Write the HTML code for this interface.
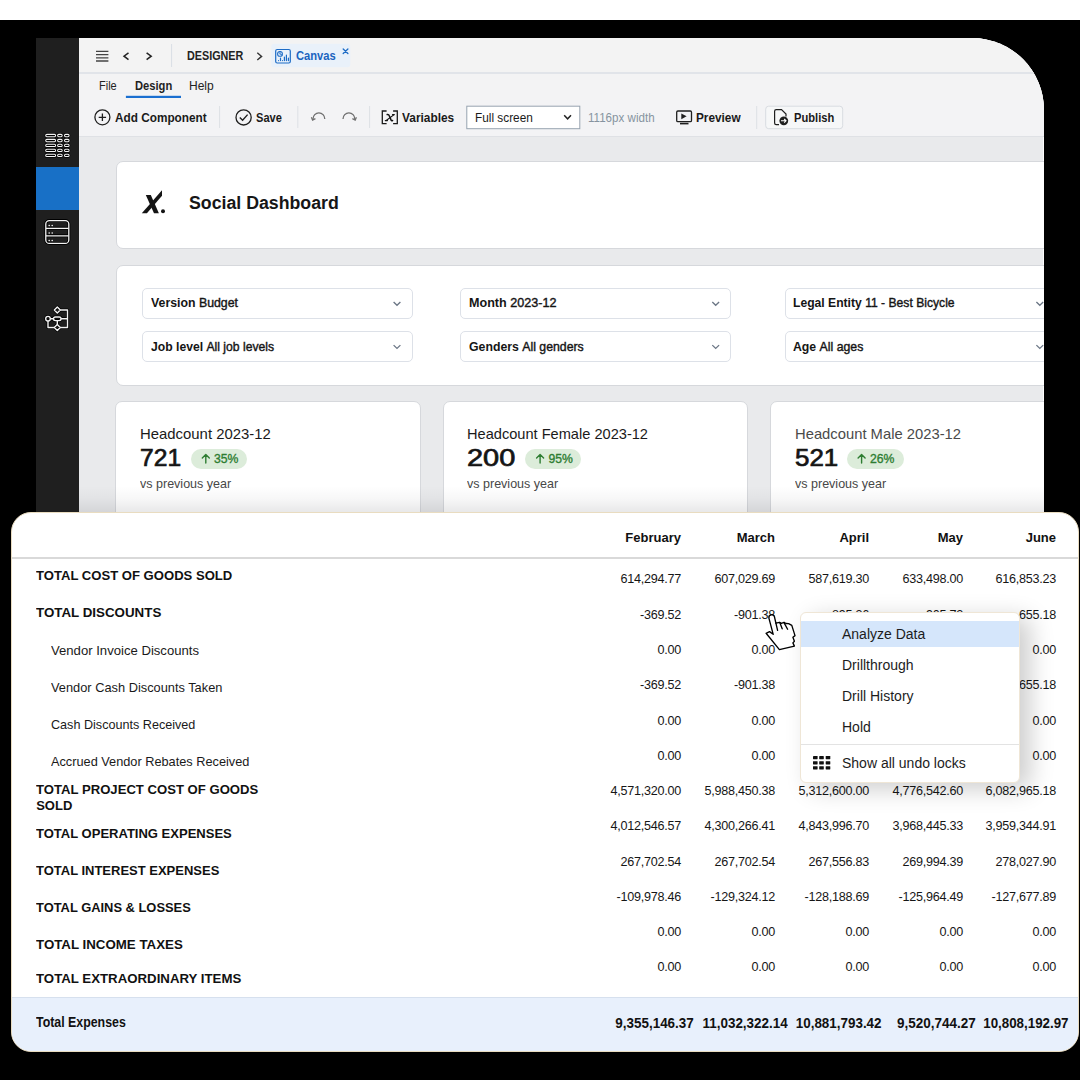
<!DOCTYPE html>
<html><head><meta charset="utf-8">
<style>
*{margin:0;padding:0;box-sizing:border-box}
html,body{width:1080px;height:1080px;overflow:hidden;background:#000;font-family:"Liberation Sans",sans-serif;color:#111}
.t{position:absolute;white-space:nowrap;line-height:1}
svg{position:absolute;overflow:visible}
#topband{position:absolute;left:0;top:0;width:1080px;height:20px;background:#fff}
#win{position:absolute;left:36px;top:38px;width:1008px;height:1000px;border-top-right-radius:72px;overflow:hidden;background:#e9eaec;box-shadow:inset -1px 1px 0 rgba(255,255,255,0.9)}
#side{position:absolute;left:0;top:0;width:43px;height:1000px;background:#1f1f1f}
#hdr{position:absolute;left:43px;top:0;width:965px;height:36px;background:#f3f3f3;border-bottom:2px solid #e1e4e9}
#menu{position:absolute;left:43px;top:36px;width:965px;height:26px;background:#f3f3f4}
#tool{position:absolute;left:43px;top:62px;width:965px;height:37px;background:#f3f3f5;border-bottom:1.5px solid #dfe1e5}
.card{position:absolute;background:#fff;border:1px solid #d6d8dc;border-radius:7px}
.dd{position:absolute;width:271px;height:31px;border:1.3px solid #dde1e8;border-radius:5px;background:#fff}
.badge{position:absolute;height:19.5px;border-radius:10px;background:#dcecda}
#fade{position:absolute;left:79px;top:486px;width:965px;height:26px;background:linear-gradient(to bottom,rgba(0,0,10,0) 0%,rgba(0,0,10,0.03) 50%,rgba(0,0,10,0.09) 100%)}
#panel{position:absolute;left:11px;top:512px;width:1068px;height:540px;background:#fff;border:1px solid #e9dcc0;border-radius:20px;overflow:hidden;box-shadow:0 1px 0 #000}
#ctx{position:absolute;left:800px;top:612px;width:220px;height:171px;background:#fff;border:1px solid #efe6d6;border-radius:6px;box-shadow:10px 6px 24px rgba(0,0,0,0.20)}
</style></head><body>
<div id="topband"></div>
<div id="win">
  <div id="side">
    <div style="position:absolute;left:0;top:129px;width:43px;height:43px;background:#1870c6"></div>
  </div>
  <div id="hdr"></div>
  <div id="menu"></div>
  <div id="tool"></div>
  <div class="card" style="left:80px;top:123px;width:1000px;height:88px"></div>
  <div class="card" style="left:80px;top:227px;width:1000px;height:121px"></div>
  <div class="card" style="left:79px;top:363px;width:306px;height:150px"></div>
  <div class="card" style="left:407px;top:363px;width:305px;height:150px"></div>
  <div class="card" style="left:734px;top:363px;width:306px;height:150px"></div>
</div>
<!-- sidebar icons -->
<svg style="left:0;top:0" width="1080" height="400">
  <g fill="none" stroke-linejoin="round">
    <g stroke="#000" stroke-width="2.4">
<rect x="45.7" y="134.35" width="9.9" height="2.3" rx="1.15"/><rect x="57.6" y="134.35" width="4.6" height="2.3" rx="1.15"/><rect x="64.5" y="134.35" width="4.6" height="2.3" rx="1.15"/>
<rect x="45.7" y="139.35" width="9.9" height="2.3" rx="1.15"/><rect x="57.6" y="139.35" width="4.6" height="2.3" rx="1.15"/><rect x="64.5" y="139.35" width="4.6" height="2.3" rx="1.15"/>
<rect x="45.7" y="144.25" width="9.9" height="2.3" rx="1.15"/><rect x="57.6" y="144.25" width="4.6" height="2.3" rx="1.15"/><rect x="64.5" y="144.25" width="4.6" height="2.3" rx="1.15"/>
<rect x="45.7" y="149.25" width="9.9" height="2.3" rx="1.15"/><rect x="57.6" y="149.25" width="4.6" height="2.3" rx="1.15"/><rect x="64.5" y="149.25" width="4.6" height="2.3" rx="1.15"/>
<rect x="45.7" y="154.25" width="9.9" height="2.3" rx="1.15"/><rect x="57.6" y="154.25" width="4.6" height="2.3" rx="1.15"/><rect x="64.5" y="154.25" width="4.6" height="2.3" rx="1.15"/>
    </g>
    <g stroke="#f4f4f4" stroke-width="1.05">
<rect x="45.7" y="134.35" width="9.9" height="2.3" rx="1.15"/><rect x="57.6" y="134.35" width="4.6" height="2.3" rx="1.15"/><rect x="64.5" y="134.35" width="4.6" height="2.3" rx="1.15"/>
<rect x="45.7" y="139.35" width="9.9" height="2.3" rx="1.15"/><rect x="57.6" y="139.35" width="4.6" height="2.3" rx="1.15"/><rect x="64.5" y="139.35" width="4.6" height="2.3" rx="1.15"/>
<rect x="45.7" y="144.25" width="9.9" height="2.3" rx="1.15"/><rect x="57.6" y="144.25" width="4.6" height="2.3" rx="1.15"/><rect x="64.5" y="144.25" width="4.6" height="2.3" rx="1.15"/>
<rect x="45.7" y="149.25" width="9.9" height="2.3" rx="1.15"/><rect x="57.6" y="149.25" width="4.6" height="2.3" rx="1.15"/><rect x="64.5" y="149.25" width="4.6" height="2.3" rx="1.15"/>
<rect x="45.7" y="154.25" width="9.9" height="2.3" rx="1.15"/><rect x="57.6" y="154.25" width="4.6" height="2.3" rx="1.15"/><rect x="64.5" y="154.25" width="4.6" height="2.3" rx="1.15"/>
    </g>
    <!-- database -->
    <g stroke="#000" stroke-width="3"><rect x="45.8" y="220.6" width="23" height="22.8" rx="3.5"/><path d="M46 228.3H68.6M46 235.8H68.6"/></g>
    <g stroke="#f2f2f2" stroke-width="1.3"><rect x="45.8" y="220.6" width="23" height="22.8" rx="3.5"/><path d="M46 228.3H68.6M46 235.8H68.6"/></g>
    <g fill="#f2f2f2" stroke="none"><circle cx="49.2" cy="225.5" r="0.8"/><circle cx="52.2" cy="225.5" r="0.8"/><circle cx="49.2" cy="233" r="0.8"/><circle cx="52.2" cy="233" r="0.8"/><circle cx="49.2" cy="240.5" r="0.8"/><circle cx="52.2" cy="240.5" r="0.8"/></g>
    <!-- flow -->
    <g stroke="#000" stroke-width="3">
      <path d="M57.3 307L60.3 310L57.3 313L54.3 310Z"/><path d="M60.3 310H67.5V327.5H60.3"/><circle cx="48" cy="318.7" r="2.3"/>
      <rect x="53.5" y="317" width="7.5" height="3.6" rx="1.8"/><path d="M50.3 318.7H53.5M61 318.7H68M48 321V327.5H54.3M57.3 320.6V324.5"/><path d="M57.3 324.5L60.3 327.5L57.3 330.5L54.3 327.5Z"/>
    </g>
    <g stroke="#f2f2f2" stroke-width="1.4">
      <path d="M57.3 307L60.3 310L57.3 313L54.3 310Z"/><path d="M60.3 310H67.5V327.5H60.3"/><circle cx="48" cy="318.7" r="2.3"/>
      <rect x="53.5" y="317" width="7.5" height="3.6" rx="1.8"/><path d="M50.3 318.7H53.5M61 318.7H68M48 321V327.5H54.3M57.3 320.6V324.5"/><path d="M57.3 324.5L60.3 327.5L57.3 330.5L54.3 327.5Z"/>
    </g>
  </g>
  <!-- header icons -->
  <g fill="none" stroke="#3a3a3a" stroke-width="1.3">
    <path d="M96 51.3H108.4M96 54.6H108.4M96 57.8H108.4M96 61H108.4" stroke="#444"/>
    <path d="M128.5 52.8L124 56.2L128.5 59.6" stroke="#222" stroke-width="1.5"/>
    <path d="M146.6 52.8L151.2 56.2L146.6 59.6" stroke="#222" stroke-width="1.5"/>
    <path d="M171.6 44V67" stroke="#d9dee5" stroke-width="1"/>
    <path d="M257.3 52.8L261.6 56.4L257.3 60" stroke="#333" stroke-width="1.4"/>
  </g>
  <rect x="271.3" y="43.8" width="79" height="23.5" rx="3" fill="#e9f1fa"/>
  <g fill="none" stroke="#1d6cc6" stroke-width="1.2" stroke-linecap="round">
    <rect x="275.7" y="49.5" width="14.6" height="13.5" rx="1.5"/>
    <circle cx="280" cy="53.9" r="2.4" stroke-width="1.1"/>
    <path d="M280 53.9V51.5M280 53.9L282 55" stroke-width="0.9"/>
    <path d="M278.5 60.6V60.5M280.5 60.6V58.2M282.5 60.6V60.5M284.4 60.6V57.2M286.4 60.6V55.2M288.4 60.6V58.2" stroke-width="1.2"/>
    <path d="M343.2 49L347.9 53.5M347.9 49L343.2 53.5" stroke-width="1.3"/>
  </g>
  <!-- menu underline -->
  <rect x="125.9" y="95.8" width="55.1" height="2.2" fill="#1a6fd0"/>
  <!-- toolbar icons -->
  <g fill="none" stroke="#1f1f1f" stroke-width="1.3">
    <circle cx="102.4" cy="117.3" r="7.5"/>
    <path d="M102.4 113.6V121M98.7 117.3H106.1"/>
    <path d="M219.6 106V128M297.8 106V128M369.6 106V128M756.7 106V129" stroke="#dde0e5" stroke-width="1"/>
    <circle cx="243.6" cy="117.4" r="7.6"/>
    <path d="M239.8 117.6L242.6 120.3L247.6 114.6" stroke-width="1.4"/>
    <path d="M313 119A5.9 6.2 0 0 1 324.8 119" stroke="#6f6f6f" stroke-width="1.3"/>
    <path d="M311.4 117.2L312.6 120L315.4 118.6" stroke="#6f6f6f" stroke-width="1.3"/>
    <path d="M343 119A5.9 6.2 0 0 1 354.8 119" stroke="#6f6f6f" stroke-width="1.3"/>
    <path d="M356.4 117.2L355.2 120L352.4 118.6" stroke="#6f6f6f" stroke-width="1.3"/>
    <path d="M386.6 111H382.3V123.6H386.6M393.1 111H397.3V123.6H393.1" stroke-width="1.3" stroke="#1a1a1a"/>
  </g>
  <g fill="none" stroke="#111" stroke-linecap="round"><path d="M387.2 114.6Q388.8 114.3 389.6 116.4L391.2 120.4Q391.6 120.9 392.6 120.5" stroke-width="1.5"/><path d="M393.8 114.9L386.2 120.5" stroke-width="1.1"/><path d="M392.6 114.6H394.2M385.4 120.6H387.4" stroke-width="1.4"/></g>
  <rect x="466.8" y="106.2" width="113" height="22.5" fill="#fff" stroke="#97a3b0" stroke-width="1"/>
  <path d="M564.2 115.3L567.6 118.8L571 115.3" fill="none" stroke="#222" stroke-width="1.5"/>
  <!-- preview -->
  <g fill="none" stroke="#1f1f1f" stroke-width="1.3">
    <rect x="676.7" y="111" width="14.8" height="10.6" rx="1.2"/>
    <path d="M680 123.6H688.5" stroke-width="1.6"/>
  </g>
  <path d="M681.3 113.4L686.6 116.3L681.3 119.2Z" fill="#1f1f1f"/>
  <!-- publish -->
  <rect x="765.7" y="106.2" width="77" height="22.5" rx="3" fill="#f6f7f8" stroke="#d8dce1"/>
  <g fill="none" stroke="#1f1f1f" stroke-width="1.2">
    <path d="M779 124.6H776.2Q774.6 124.6 774.6 123V111.2Q774.6 109.6 776.2 109.6H781.5L786 114V116.5"/>
  </g>
  <circle cx="783.8" cy="120.8" r="4.4" fill="#1f1f1f"/>
  <path d="M781 120.8H786M784.2 119L786 120.8L784.2 122.6" fill="none" stroke="#fff" stroke-width="1.1"/>
  <!-- logo -->
  <path d="M145.8 195H150.8L158.9 213.3H154Z" fill="#141414"/><path d="M141.8 213.3H146.9L162 195.8V190.3Z" fill="#141414"/>
  <circle cx="163" cy="211.3" r="2" fill="#141414"/>
</svg>
<div style="position:absolute;left:0;top:0;width:1044px;height:512px;overflow:hidden">
<!-- dropdowns -->
<div class="dd" style="left:141.7px;top:288.3px"></div>
<div class="dd" style="left:141.7px;top:331.4px"></div>
<div class="dd" style="left:460.4px;top:288.3px"></div>
<div class="dd" style="left:460.4px;top:331.4px"></div>
<div class="dd" style="left:784.5px;top:288.3px"></div>
<div class="dd" style="left:784.5px;top:331.4px"></div>
<svg style="left:0;top:0" width="1080" height="400">
  <g fill="none" stroke="#6b7685" stroke-width="1.3">
    <path d="M393.6 302L397 305.3L400.4 302M393.6 345.1L397 348.4L400.4 345.1"/>
    <path d="M712.3 302L715.7 305.3L719.1 302M712.3 345.1L715.7 348.4L719.1 345.1"/>
    <path d="M1036.4 302L1039.8 305.3L1043.2 302M1036.4 345.1L1039.8 348.4L1043.2 345.1"/>
  </g>
</svg>
<!-- badges -->
<div class="badge" style="left:190.7px;top:449.2px;width:56.3px"></div>
<div class="badge" style="left:525px;top:449px;width:56.3px"></div>
<div class="badge" style="left:847.3px;top:449.2px;width:56.7px"></div>
<svg style="left:0;top:0" width="1080" height="500">
  <g fill="none" stroke="#2e7d32" stroke-width="1.4" stroke-linecap="round" stroke-linejoin="round">
    <path d="M205.8 463V454.5M202.3 458L205.8 454.5L209.3 458"/>
    <path d="M540.1 463V454.5M536.6 458L540.1 454.5L543.6 458"/>
    <path d="M861.6 463V454.5M858.1 458L861.6 454.5L865.1 458"/>
  </g>
</svg>
<div class="t" style="left:214px;top:452.9px;font-size:12.2px;color:#2e7d32;-webkit-text-stroke:0.35px #2e7d32;transform:scaleX(1.0);transform-origin:0 0">35%</div>
<div class="t" style="left:548.4px;top:452.9px;font-size:12.2px;color:#2e7d32;-webkit-text-stroke:0.35px #2e7d32;transform-origin:0 0">95%</div>
<div class="t" style="left:870px;top:452.9px;font-size:12.2px;color:#2e7d32;-webkit-text-stroke:0.35px #2e7d32;transform-origin:0 0">26%</div>
<div class="t" style="left:186.7px;top:50.42px;font-size:12.5px;font-weight:bold;color:#222;transform:scaleX(0.8622);transform-origin:0 0;">DESIGNER</div>
<div class="t" style="left:295.6px;top:50.42px;font-size:12.5px;font-weight:bold;color:#1b64bf;transform:scaleX(0.8924);transform-origin:0 0;">Canvas</div>
<div class="t" style="left:99.3px;top:79.94px;font-size:12px;font-weight:normal;color:#222;transform:scaleX(0.9150);transform-origin:0 0;">File</div>
<div class="t" style="left:134.8px;top:79.94px;font-size:12px;font-weight:bold;color:#1f1f1f;transform:scaleX(0.9296);transform-origin:0 0;">Design</div>
<div class="t" style="left:189.3px;top:79.94px;font-size:12px;font-weight:normal;color:#222;transform:scaleX(1.0005);transform-origin:0 0;">Help</div>
<div class="t" style="left:115.0px;top:112.43px;font-size:12.6px;font-weight:bold;color:#1a1a1a;transform:scaleX(0.9363);transform-origin:0 0;">Add Component</div>
<div class="t" style="left:255.6px;top:112.43px;font-size:12.6px;font-weight:bold;color:#1a1a1a;transform:scaleX(0.8803);transform-origin:0 0;">Save</div>
<div class="t" style="left:401.9px;top:112.43px;font-size:12.6px;font-weight:bold;color:#1a1a1a;transform:scaleX(0.9435);transform-origin:0 0;">Variables</div>
<div class="t" style="left:474.6px;top:112.43px;font-size:12.6px;font-weight:normal;color:#1a1a1a;transform:scaleX(0.9384);transform-origin:0 0;">Full screen</div>
<div class="t" style="left:588.4px;top:112.43px;font-size:12.6px;font-weight:normal;color:#8693a0;transform:scaleX(0.9204);transform-origin:0 0;">1116px width</div>
<div class="t" style="left:696.0px;top:112.43px;font-size:12.6px;font-weight:bold;color:#1a1a1a;transform:scaleX(0.9368);transform-origin:0 0;">Preview</div>
<div class="t" style="left:793.7px;top:112.43px;font-size:12.6px;font-weight:bold;color:#1a1a1a;transform:scaleX(0.8860);transform-origin:0 0;">Publish</div>
<div class="t" style="left:189.0px;top:193.51px;font-size:18.3px;font-weight:bold;color:#161616;transform:scaleX(0.9701);transform-origin:0 0;">Social Dashboard</div>
<div class="t" style="left:150.8px;top:297.46px;font-size:12.8px;font-weight:bold;color:#151515;transform:scaleX(0.9628);transform-origin:0 0;">Version <span style="font-weight:normal;-webkit-text-stroke:0.4px #151515">Budget</span></div>
<div class="t" style="left:150.8px;top:340.56px;font-size:12.8px;font-weight:bold;color:#151515;transform:scaleX(0.9508);transform-origin:0 0;">Job level <span style="font-weight:normal;-webkit-text-stroke:0.4px #151515">All job levels</span></div>
<div class="t" style="left:469.3px;top:297.46px;font-size:12.8px;font-weight:bold;color:#151515;transform:scaleX(0.9831);transform-origin:0 0;">Month <span style="font-weight:normal;-webkit-text-stroke:0.4px #151515">2023-12</span></div>
<div class="t" style="left:469.3px;top:340.56px;font-size:12.8px;font-weight:bold;color:#151515;transform:scaleX(0.9597);transform-origin:0 0;">Genders <span style="font-weight:normal;-webkit-text-stroke:0.4px #151515">All genders</span></div>
<div class="t" style="left:793.0px;top:297.46px;font-size:12.8px;font-weight:bold;color:#151515;transform:scaleX(0.9481);transform-origin:0 0;">Legal Entity <span style="font-weight:normal;-webkit-text-stroke:0.4px #151515">11 - Best Bicycle</span></div>
<div class="t" style="left:793.0px;top:340.56px;font-size:12.8px;font-weight:bold;color:#151515;transform:scaleX(0.9595);transform-origin:0 0;">Age <span style="font-weight:normal;-webkit-text-stroke:0.4px #151515">All ages</span></div>
<div class="t" style="left:139.6px;top:426.00px;font-size:15px;font-weight:normal;color:#1a1a1a;transform:scaleX(0.9926);transform-origin:0 0;">Headcount 2023-12</div>
<div class="t" style="left:139.6px;top:446.36px;font-size:24.5px;font-weight:normal;color:#141414;transform:scaleX(1.0051);transform-origin:0 0;-webkit-text-stroke:0.7px #141414">721</div>
<div class="t" style="left:139.6px;top:477.00px;font-size:13px;font-weight:normal;color:#474747;transform:scaleX(0.9635);transform-origin:0 0;">vs previous year</div>
<div class="t" style="left:467.3px;top:426.00px;font-size:15px;font-weight:normal;color:#1a1a1a;transform:scaleX(0.9733);transform-origin:0 0;">Headcount Female 2023-12</div>
<div class="t" style="left:467.3px;top:446.36px;font-size:24.5px;font-weight:normal;color:#141414;transform:scaleX(1.1812);transform-origin:0 0;-webkit-text-stroke:0.7px #141414">200</div>
<div class="t" style="left:467.3px;top:477.00px;font-size:13px;font-weight:normal;color:#474747;transform:scaleX(0.9635);transform-origin:0 0;">vs previous year</div>
<div class="t" style="left:794.6px;top:426.00px;font-size:15px;font-weight:normal;color:#4a4a4a;transform:scaleX(0.9854);transform-origin:0 0;">Headcount Male 2023-12</div>
<div class="t" style="left:794.6px;top:446.36px;font-size:24.5px;font-weight:normal;color:#141414;transform:scaleX(1.0589);transform-origin:0 0;-webkit-text-stroke:0.7px #141414">521</div>
<div class="t" style="left:794.6px;top:477.00px;font-size:13px;font-weight:normal;color:#474747;transform:scaleX(0.9635);transform-origin:0 0;">vs previous year</div>
</div>
<div id="fade"></div>
<div id="panel">
  <div style="position:absolute;left:0;top:44px;width:1068px;height:1.5px;background:#d9d9d9"></div>
  <div style="position:absolute;left:0;top:484px;width:1068px;height:60px;background:#e8f0fc;border-top:1px solid #d6e0ee"></div>
</div>
<div class="t" style="right:399.0px;top:531.20px;font-size:13px;font-weight:bold;color:#111;transform-origin:100% 0;">February</div>
<div class="t" style="right:305.0px;top:531.20px;font-size:13px;font-weight:bold;color:#111;transform-origin:100% 0;">March</div>
<div class="t" style="right:211.0px;top:531.20px;font-size:13px;font-weight:bold;color:#111;transform-origin:100% 0;">April</div>
<div class="t" style="right:117.0px;top:531.20px;font-size:13px;font-weight:bold;color:#111;transform-origin:100% 0;">May</div>
<div class="t" style="right:24.0px;top:531.20px;font-size:13px;font-weight:bold;color:#111;transform-origin:100% 0;">June</div>
<div class="t" style="left:36.2px;top:569.40px;font-size:13px;font-weight:bold;color:#111;transform:scaleX(1.0066);transform-origin:0 0;">TOTAL COST OF GOODS SOLD</div>
<div class="t" style="left:36.2px;top:606.10px;font-size:13px;font-weight:bold;color:#111;transform:scaleX(1.0265);transform-origin:0 0;">TOTAL DISCOUNTS</div>
<div class="t" style="left:51.1px;top:644.10px;font-size:13px;font-weight:normal;color:#1a1a1a;transform:scaleX(1.0088);transform-origin:0 0;">Vendor Invoice Discounts</div>
<div class="t" style="left:51.1px;top:681.20px;font-size:13px;font-weight:normal;color:#1a1a1a;transform:scaleX(0.9855);transform-origin:0 0;">Vendor Cash Discounts Taken</div>
<div class="t" style="left:51.1px;top:718.30px;font-size:13px;font-weight:normal;color:#1a1a1a;transform:scaleX(0.9700);transform-origin:0 0;">Cash Discounts Received</div>
<div class="t" style="left:51.1px;top:755.00px;font-size:13px;font-weight:normal;color:#1a1a1a;transform:scaleX(0.9804);transform-origin:0 0;">Accrued Vendor Rebates Received</div>
<div class="t" style="left:36.2px;top:782.80px;font-size:13px;font-weight:bold;color:#111;transform:scaleX(1.0091);transform-origin:0 0;">TOTAL PROJECT COST OF GOODS</div>
<div class="t" style="left:36.2px;top:827.30px;font-size:13px;font-weight:bold;color:#111;transform:scaleX(1.0015);transform-origin:0 0;">TOTAL OPERATING EXPENSES</div>
<div class="t" style="left:36.2px;top:864.10px;font-size:13px;font-weight:bold;color:#111;transform:scaleX(0.9990);transform-origin:0 0;">TOTAL INTEREST EXPENSES</div>
<div class="t" style="left:36.2px;top:900.90px;font-size:13px;font-weight:bold;color:#111;transform:scaleX(0.9921);transform-origin:0 0;">TOTAL GAINS &amp; LOSSES</div>
<div class="t" style="left:36.2px;top:937.50px;font-size:13px;font-weight:bold;color:#111;transform:scaleX(1.0230);transform-origin:0 0;">TOTAL INCOME TAXES</div>
<div class="t" style="left:36.2px;top:972.40px;font-size:13px;font-weight:bold;color:#111;transform:scaleX(1.0188);transform-origin:0 0;">TOTAL EXTRAORDINARY ITEMS</div>
<div class="t" style="left:36.2px;top:799.10px;font-size:13px;font-weight:bold;color:#111;transform-origin:0 0;">SOLD</div>
<div class="t" style="left:36.1px;top:1015.48px;font-size:14.2px;font-weight:bold;color:#111;transform:scaleX(0.8716);transform-origin:0 0;">Total Expenses</div>
<div class="t" style="right:399.0px;top:573.13px;font-size:12.6px;font-weight:normal;color:#161616;transform-origin:100% 0;letter-spacing:-0.25px">614,294.77</div>
<div class="t" style="right:305.0px;top:573.13px;font-size:12.6px;font-weight:normal;color:#161616;transform-origin:100% 0;letter-spacing:-0.25px">607,029.69</div>
<div class="t" style="right:211.0px;top:573.13px;font-size:12.6px;font-weight:normal;color:#161616;transform-origin:100% 0;letter-spacing:-0.25px">587,619.30</div>
<div class="t" style="right:117.0px;top:573.13px;font-size:12.6px;font-weight:normal;color:#161616;transform-origin:100% 0;letter-spacing:-0.25px">633,498.00</div>
<div class="t" style="right:24.0px;top:573.13px;font-size:12.6px;font-weight:normal;color:#161616;transform-origin:100% 0;letter-spacing:-0.25px">616,853.23</div>
<div class="t" style="right:399.0px;top:608.93px;font-size:12.6px;font-weight:normal;color:#161616;transform-origin:100% 0;letter-spacing:-0.25px">-369.52</div>
<div class="t" style="right:305.0px;top:608.93px;font-size:12.6px;font-weight:normal;color:#161616;transform-origin:100% 0;letter-spacing:-0.25px">-901.38</div>
<div class="t" style="right:211.0px;top:608.93px;font-size:12.6px;font-weight:normal;color:#161616;transform-origin:100% 0;letter-spacing:-0.25px">-895.36</div>
<div class="t" style="right:117.0px;top:608.93px;font-size:12.6px;font-weight:normal;color:#161616;transform-origin:100% 0;letter-spacing:-0.25px">-905.72</div>
<div class="t" style="right:24.0px;top:608.93px;font-size:12.6px;font-weight:normal;color:#161616;transform-origin:100% 0;letter-spacing:-0.25px">-655.18</div>
<div class="t" style="right:399.0px;top:644.43px;font-size:12.6px;font-weight:normal;color:#161616;transform-origin:100% 0;letter-spacing:-0.25px">0.00</div>
<div class="t" style="right:305.0px;top:644.43px;font-size:12.6px;font-weight:normal;color:#161616;transform-origin:100% 0;letter-spacing:-0.25px">0.00</div>
<div class="t" style="right:211.0px;top:644.43px;font-size:12.6px;font-weight:normal;color:#161616;transform-origin:100% 0;letter-spacing:-0.25px">0.00</div>
<div class="t" style="right:117.0px;top:644.43px;font-size:12.6px;font-weight:normal;color:#161616;transform-origin:100% 0;letter-spacing:-0.25px">0.00</div>
<div class="t" style="right:24.0px;top:644.43px;font-size:12.6px;font-weight:normal;color:#161616;transform-origin:100% 0;letter-spacing:-0.25px">0.00</div>
<div class="t" style="right:399.0px;top:679.33px;font-size:12.6px;font-weight:normal;color:#161616;transform-origin:100% 0;letter-spacing:-0.25px">-369.52</div>
<div class="t" style="right:305.0px;top:679.33px;font-size:12.6px;font-weight:normal;color:#161616;transform-origin:100% 0;letter-spacing:-0.25px">-901.38</div>
<div class="t" style="right:211.0px;top:679.33px;font-size:12.6px;font-weight:normal;color:#161616;transform-origin:100% 0;letter-spacing:-0.25px">-895.36</div>
<div class="t" style="right:117.0px;top:679.33px;font-size:12.6px;font-weight:normal;color:#161616;transform-origin:100% 0;letter-spacing:-0.25px">-905.72</div>
<div class="t" style="right:24.0px;top:679.33px;font-size:12.6px;font-weight:normal;color:#161616;transform-origin:100% 0;letter-spacing:-0.25px">-655.18</div>
<div class="t" style="right:399.0px;top:714.93px;font-size:12.6px;font-weight:normal;color:#161616;transform-origin:100% 0;letter-spacing:-0.25px">0.00</div>
<div class="t" style="right:305.0px;top:714.93px;font-size:12.6px;font-weight:normal;color:#161616;transform-origin:100% 0;letter-spacing:-0.25px">0.00</div>
<div class="t" style="right:211.0px;top:714.93px;font-size:12.6px;font-weight:normal;color:#161616;transform-origin:100% 0;letter-spacing:-0.25px">0.00</div>
<div class="t" style="right:117.0px;top:714.93px;font-size:12.6px;font-weight:normal;color:#161616;transform-origin:100% 0;letter-spacing:-0.25px">0.00</div>
<div class="t" style="right:24.0px;top:714.93px;font-size:12.6px;font-weight:normal;color:#161616;transform-origin:100% 0;letter-spacing:-0.25px">0.00</div>
<div class="t" style="right:399.0px;top:750.03px;font-size:12.6px;font-weight:normal;color:#161616;transform-origin:100% 0;letter-spacing:-0.25px">0.00</div>
<div class="t" style="right:305.0px;top:750.03px;font-size:12.6px;font-weight:normal;color:#161616;transform-origin:100% 0;letter-spacing:-0.25px">0.00</div>
<div class="t" style="right:211.0px;top:750.03px;font-size:12.6px;font-weight:normal;color:#161616;transform-origin:100% 0;letter-spacing:-0.25px">0.00</div>
<div class="t" style="right:117.0px;top:750.03px;font-size:12.6px;font-weight:normal;color:#161616;transform-origin:100% 0;letter-spacing:-0.25px">0.00</div>
<div class="t" style="right:24.0px;top:750.03px;font-size:12.6px;font-weight:normal;color:#161616;transform-origin:100% 0;letter-spacing:-0.25px">0.00</div>
<div class="t" style="right:399.0px;top:784.93px;font-size:12.6px;font-weight:normal;color:#161616;transform-origin:100% 0;letter-spacing:-0.25px">4,571,320.00</div>
<div class="t" style="right:305.0px;top:784.93px;font-size:12.6px;font-weight:normal;color:#161616;transform-origin:100% 0;letter-spacing:-0.25px">5,988,450.38</div>
<div class="t" style="right:211.0px;top:784.93px;font-size:12.6px;font-weight:normal;color:#161616;transform-origin:100% 0;letter-spacing:-0.25px">5,312,600.00</div>
<div class="t" style="right:117.0px;top:784.93px;font-size:12.6px;font-weight:normal;color:#161616;transform-origin:100% 0;letter-spacing:-0.25px">4,776,542.60</div>
<div class="t" style="right:24.0px;top:784.93px;font-size:12.6px;font-weight:normal;color:#161616;transform-origin:100% 0;letter-spacing:-0.25px">6,082,965.18</div>
<div class="t" style="right:399.0px;top:820.33px;font-size:12.6px;font-weight:normal;color:#161616;transform-origin:100% 0;letter-spacing:-0.25px">4,012,546.57</div>
<div class="t" style="right:305.0px;top:820.33px;font-size:12.6px;font-weight:normal;color:#161616;transform-origin:100% 0;letter-spacing:-0.25px">4,300,266.41</div>
<div class="t" style="right:211.0px;top:820.33px;font-size:12.6px;font-weight:normal;color:#161616;transform-origin:100% 0;letter-spacing:-0.25px">4,843,996.70</div>
<div class="t" style="right:117.0px;top:820.33px;font-size:12.6px;font-weight:normal;color:#161616;transform-origin:100% 0;letter-spacing:-0.25px">3,968,445.33</div>
<div class="t" style="right:24.0px;top:820.33px;font-size:12.6px;font-weight:normal;color:#161616;transform-origin:100% 0;letter-spacing:-0.25px">3,959,344.91</div>
<div class="t" style="right:399.0px;top:855.53px;font-size:12.6px;font-weight:normal;color:#161616;transform-origin:100% 0;letter-spacing:-0.25px">267,702.54</div>
<div class="t" style="right:305.0px;top:855.53px;font-size:12.6px;font-weight:normal;color:#161616;transform-origin:100% 0;letter-spacing:-0.25px">267,702.54</div>
<div class="t" style="right:211.0px;top:855.53px;font-size:12.6px;font-weight:normal;color:#161616;transform-origin:100% 0;letter-spacing:-0.25px">267,556.83</div>
<div class="t" style="right:117.0px;top:855.53px;font-size:12.6px;font-weight:normal;color:#161616;transform-origin:100% 0;letter-spacing:-0.25px">269,994.39</div>
<div class="t" style="right:24.0px;top:855.53px;font-size:12.6px;font-weight:normal;color:#161616;transform-origin:100% 0;letter-spacing:-0.25px">278,027.90</div>
<div class="t" style="right:399.0px;top:890.93px;font-size:12.6px;font-weight:normal;color:#161616;transform-origin:100% 0;letter-spacing:-0.25px">-109,978.46</div>
<div class="t" style="right:305.0px;top:890.93px;font-size:12.6px;font-weight:normal;color:#161616;transform-origin:100% 0;letter-spacing:-0.25px">-129,324.12</div>
<div class="t" style="right:211.0px;top:890.93px;font-size:12.6px;font-weight:normal;color:#161616;transform-origin:100% 0;letter-spacing:-0.25px">-128,188.69</div>
<div class="t" style="right:117.0px;top:890.93px;font-size:12.6px;font-weight:normal;color:#161616;transform-origin:100% 0;letter-spacing:-0.25px">-125,964.49</div>
<div class="t" style="right:24.0px;top:890.93px;font-size:12.6px;font-weight:normal;color:#161616;transform-origin:100% 0;letter-spacing:-0.25px">-127,677.89</div>
<div class="t" style="right:399.0px;top:926.33px;font-size:12.6px;font-weight:normal;color:#161616;transform-origin:100% 0;letter-spacing:-0.25px">0.00</div>
<div class="t" style="right:305.0px;top:926.33px;font-size:12.6px;font-weight:normal;color:#161616;transform-origin:100% 0;letter-spacing:-0.25px">0.00</div>
<div class="t" style="right:211.0px;top:926.33px;font-size:12.6px;font-weight:normal;color:#161616;transform-origin:100% 0;letter-spacing:-0.25px">0.00</div>
<div class="t" style="right:117.0px;top:926.33px;font-size:12.6px;font-weight:normal;color:#161616;transform-origin:100% 0;letter-spacing:-0.25px">0.00</div>
<div class="t" style="right:24.0px;top:926.33px;font-size:12.6px;font-weight:normal;color:#161616;transform-origin:100% 0;letter-spacing:-0.25px">0.00</div>
<div class="t" style="right:399.0px;top:961.43px;font-size:12.6px;font-weight:normal;color:#161616;transform-origin:100% 0;letter-spacing:-0.25px">0.00</div>
<div class="t" style="right:305.0px;top:961.43px;font-size:12.6px;font-weight:normal;color:#161616;transform-origin:100% 0;letter-spacing:-0.25px">0.00</div>
<div class="t" style="right:211.0px;top:961.43px;font-size:12.6px;font-weight:normal;color:#161616;transform-origin:100% 0;letter-spacing:-0.25px">0.00</div>
<div class="t" style="right:117.0px;top:961.43px;font-size:12.6px;font-weight:normal;color:#161616;transform-origin:100% 0;letter-spacing:-0.25px">0.00</div>
<div class="t" style="right:24.0px;top:961.43px;font-size:12.6px;font-weight:normal;color:#161616;transform-origin:100% 0;letter-spacing:-0.25px">0.00</div>
<div class="t" style="right:386.0px;top:1015.55px;font-size:14px;font-weight:bold;color:#111;transform:scaleX(0.9590);transform-origin:100% 0;">9,355,146.37</div>
<div class="t" style="right:292.0px;top:1015.55px;font-size:14px;font-weight:bold;color:#111;transform:scaleX(0.9610);transform-origin:100% 0;">11,032,322.14</div>
<div class="t" style="right:198.0px;top:1015.55px;font-size:14px;font-weight:bold;color:#111;transform:scaleX(0.9583);transform-origin:100% 0;">10,881,793.42</div>
<div class="t" style="right:104.2px;top:1015.55px;font-size:14px;font-weight:bold;color:#111;transform:scaleX(0.9627);transform-origin:100% 0;">9,520,744.27</div>
<div class="t" style="right:11.0px;top:1015.55px;font-size:14px;font-weight:bold;color:#111;transform:scaleX(0.9527);transform-origin:100% 0;">10,808,192.97</div>
<div id="ctx">
  <div style="position:absolute;left:0;top:7.5px;width:218px;height:26.5px;background:#d5e6fb"></div>
  <div style="position:absolute;left:0;top:131px;width:218px;height:1.2px;background:#e3e3e3"></div>
  <svg style="left:12px;top:143px" width="20" height="15"><g fill="#111"><rect x="0" y="0" width="4.6" height="3.2" rx="0.4"/><rect x="6.2" y="0" width="4.6" height="3.2" rx="0.4"/><rect x="12.7" y="0" width="4.6" height="3.2" rx="0.4"/><rect x="0" y="5.2" width="4.6" height="3.2" rx="0.4"/><rect x="6.2" y="5.2" width="4.6" height="3.2" rx="0.4"/><rect x="12.7" y="5.2" width="4.6" height="3.2" rx="0.4"/><rect x="0" y="10.2" width="4.6" height="3.2" rx="0.4"/><rect x="6.2" y="10.2" width="4.6" height="3.2" rx="0.4"/><rect x="12.7" y="10.2" width="4.6" height="3.2" rx="0.4"/></g></svg>
<div class="t" style="left:41px;top:14.35px;font-size:14px;color:#1c1c1c">Analyze Data</div>
<div class="t" style="left:41px;top:45.45px;font-size:14px;color:#1c1c1c">Drillthrough</div>
<div class="t" style="left:41px;top:76.25px;font-size:14px;color:#1c1c1c">Drill History</div>
<div class="t" style="left:41px;top:106.85px;font-size:14px;color:#1c1c1c">Hold</div>
<div class="t" style="left:41px;top:143.15px;font-size:14px;color:#1c1c1c">Show all undo locks</div>
</div>
<!-- hand cursor -->
<svg style="left:0;top:0" width="1080" height="1080">
  <path d="M773.2 634.3L768.9 618.2Q768.6 615.2 771.2 614.8Q773.8 614.6 774.4 616.6L775.9 623.2L779.6 622.3L781.3 623.3L784 622.3L786 623.5L788.6 623.6L791.8 625.4L795 635.6L792.9 637.2L794.4 641.2L792.9 642.9L794.4 646.1L779.4 649.6L766.1 633.3L769.5 631.6Z" fill="#fff" stroke="#000" stroke-width="1.35" stroke-linejoin="round"/>
  <path d="M775.9 623.2L777.6 630.4M779.8 622.6L782.2 628.8M784 622.6L787.6 629.2" fill="none" stroke="#000" stroke-width="1.35" stroke-linecap="round"/>
</svg>
</body></html>
